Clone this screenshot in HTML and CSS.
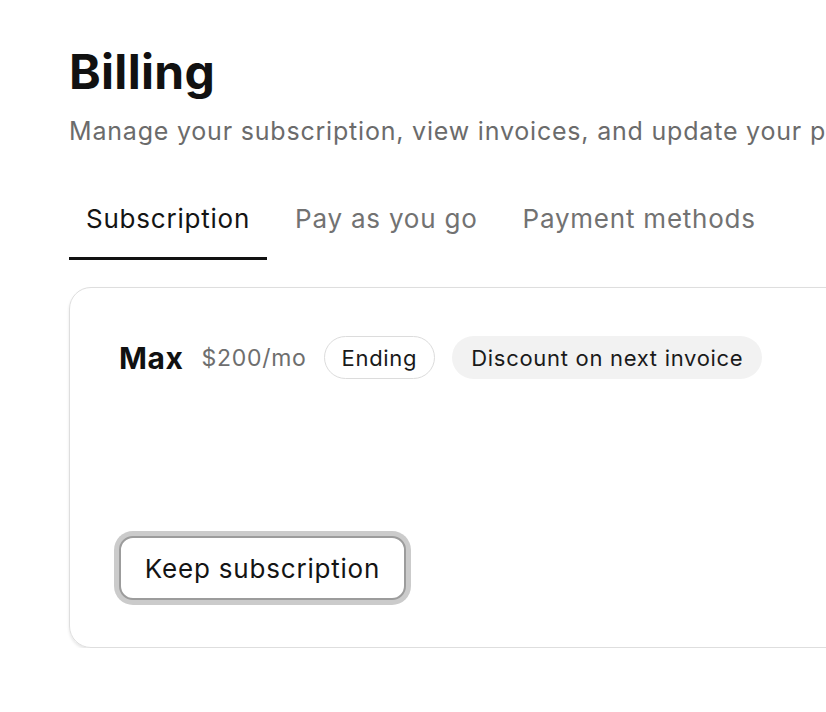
FILE: index.html
```html
<!DOCTYPE html>
<html lang="en">
<head>
<meta charset="utf-8">
<title>Billing</title>
<link rel="stylesheet" href="styles.css">
</head>
<body>
<main class="page">
  <h1 class="title">Billing</h1>
  <p class="subtitle">Manage your subscription, view invoices, and update your payment methods.</p>
  <nav class="tabs">
    <div class="tab tab-active">Subscription</div>
    <div class="tab">Pay as you go</div>
    <div class="tab">Payment methods</div>
  </nav>
  <section class="card">
    <div class="plan-row">
      <span class="plan-name">Max</span>
      <span class="plan-price">$200/mo</span>
      <span class="pill pill-outline">Ending</span>
      <span class="pill pill-muted">Discount on next invoice</span>
    </div>
    <button class="btn">Keep subscription</button>
  </section>
</main>
</body>
</html>
```

FILE: styles.css
```css
html, body {
  margin: 0;
  padding: 0;
  background: #ffffff;
  overflow: hidden;
}
body {
  font-family: Inter, "Noto Sans", sans-serif;
  color: #141414;
}
.page {
  width: 1000px;
  padding: 44px 0 0 69px;
}
.title {
  margin: 0;
  font-size: 48px;
  font-weight: 700;
  line-height: 56px;
  letter-spacing: 0.3px;
  color: #111111;
}
.subtitle {
  margin: 15px 0 0 0;
  font-size: 25px;
  line-height: 32px;
  letter-spacing: 0.8px;
  color: #6b6b6b;
  white-space: nowrap;
}
.tabs {
  display: flex;
  gap: 11px;
  margin-top: 46px;
}
.tab {
  padding: 10px 17px 22px 17px;
  font-size: 26px;
  line-height: 32px;
  letter-spacing: 0.78px;
  color: #727272;
  border-bottom: 3px solid transparent;
}
.tab-active {
  color: #141414;
  border-bottom-color: #111111;
}
.card {
  margin-top: 27px;
  width: 900px;
  box-sizing: border-box;
  border: 1.5px solid #dedede;
  border-radius: 22px;
  box-shadow: 0 2px 3px rgba(0, 0, 0, 0.1);
  padding: 48px 49px 47px 49px;
}
.plan-row {
  display: flex;
  align-items: center;
  gap: 17px;
  height: 43px;
}
.plan-name {
  font-size: 30px;
  font-weight: 700;
  letter-spacing: 0.6px;
  color: #111111;
  margin-right: 1px;
}
.plan-price {
  font-size: 23px;
  letter-spacing: 0.7px;
  color: #6e6e6e;
}
.pill {
  display: inline-flex;
  align-items: center;
  height: 43px;
  box-sizing: border-box;
  border-radius: 999px;
  font-size: 22px;
  letter-spacing: 0.7px;
  color: #1a1a1a;
}
.pill-outline {
  border: 1.5px solid #dcdcdc;
  padding: 0 17px;
}
.pill-muted {
  background: #f2f2f2;
  padding: 0 19px;
}
.btn {
  display: block;
  margin-top: 157px;
  width: 287px;
  height: 64px;
  box-sizing: border-box;
  border: 2px solid #9c9c9c;
  border-radius: 14px;
  box-shadow: 0 0 0 5px #cbcbcb;
  background: #ffffff;
  font-family: Inter, "Noto Sans", sans-serif;
  font-size: 26px;
  letter-spacing: 0.8px;
  color: #141414;
  cursor: pointer;
}
```
